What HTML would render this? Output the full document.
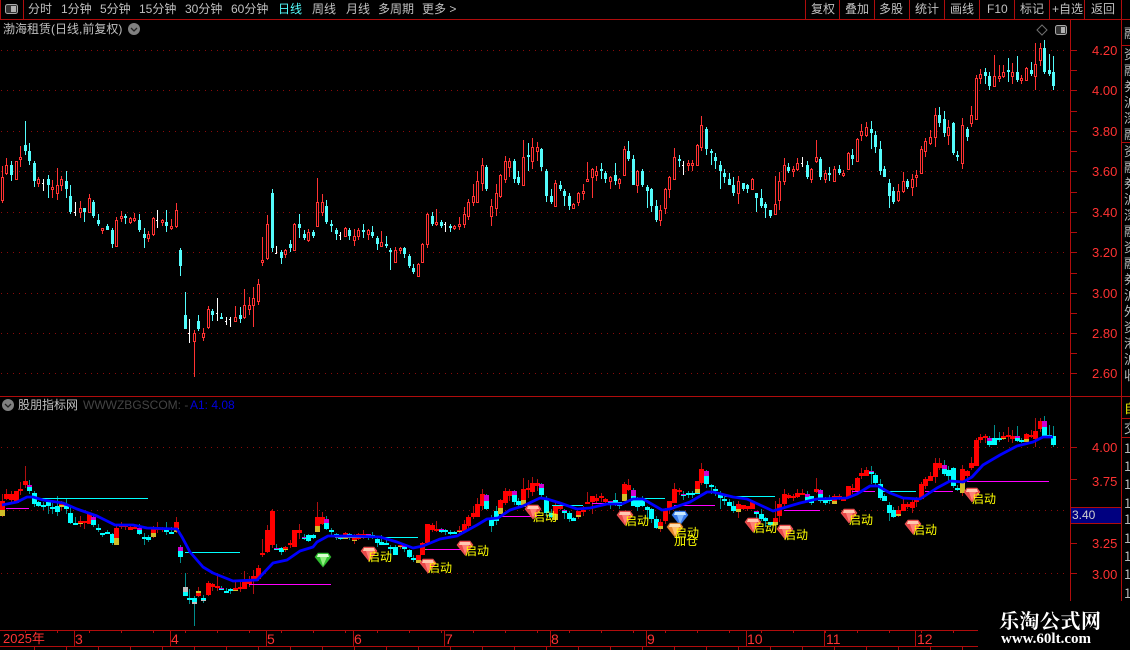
<!DOCTYPE html>
<html><head><meta charset="utf-8">
<style>
html,body{margin:0;padding:0;background:#000;width:1130px;height:650px;overflow:hidden}
#w{position:relative;width:1130px;height:650px;overflow:hidden;background:#000;font-family:"Liberation Sans","WenQuanYi Zen Hei","Noto Sans CJK SC",sans-serif}
svg{position:absolute;left:0;top:0}
.t{position:absolute;white-space:nowrap;font-size:12px;line-height:14px;color:#c0c0c0;font-family:"Liberation Sans","WenQuanYi Zen Hei","Noto Sans CJK SC",sans-serif}
.p{position:absolute;white-space:nowrap;font-size:13px;line-height:14px;color:#ff3232;font-family:"Liberation Sans",sans-serif}
.n{position:absolute;white-space:nowrap;font-size:14px;line-height:14px;color:#ff3232;font-family:"Liberation Sans",sans-serif}
.y{position:absolute;white-space:nowrap;font-size:12px;line-height:12px;color:#ffff00;font-family:"Liberation Sans","WenQuanYi Zen Hei","Noto Sans CJK SC",sans-serif}
.c{position:absolute;left:1124px;width:6px;overflow:hidden;white-space:nowrap;font-size:13px;line-height:14px;color:#b8b8b8;font-family:"WenQuanYi Zen Hei","Noto Sans CJK SC",sans-serif}
</style></head><body><div id="w">
<svg id="s" width="1130" height="650" viewBox="0 0 1130 650" shape-rendering="crispEdges"></svg>

<span class="t" style="left:28px;top:2px">分时</span>
<span class="t" style="left:61px;top:2px">1分钟</span>
<span class="t" style="left:100px;top:2px">5分钟</span>
<span class="t" style="left:139px;top:2px">15分钟</span>
<span class="t" style="left:185px;top:2px">30分钟</span>
<span class="t" style="left:231px;top:2px">60分钟</span>
<span class="t" style="left:278px;top:2px;color:#54fcfc">日线</span>
<span class="t" style="left:312px;top:2px">周线</span>
<span class="t" style="left:346px;top:2px">月线</span>
<span class="t" style="left:378px;top:2px">多周期</span>
<span class="t" style="left:422px;top:2px">更多 &gt;</span>
<span class="t" style="left:811px;top:2px">复权</span>
<span class="t" style="left:845px;top:2px">叠加</span>
<span class="t" style="left:879px;top:2px">多股</span>
<span class="t" style="left:915px;top:2px">统计</span>
<span class="t" style="left:950px;top:2px">画线</span>
<span class="t" style="left:987px;top:2px">F10</span>
<span class="t" style="left:1020px;top:2px">标记</span>
<span class="t" style="left:1052px;top:2px">+自选</span>
<span class="t" style="left:1091px;top:2px">返回</span>

<span class="t" style="left:3px;top:22px">渤海租赁(日线,前复权)</span>
<span class="t" style="left:18px;top:398px">股朋指标网</span>
<span class="t" style="left:83px;top:398px;color:#444">WWWZBGSCOM: -</span>
<span class="t" style="left:190px;top:398px;color:#0000e0">A1: 4.08</span>

<span class="p" style="left:1092px;top:44px">4.20</span>
<span class="p" style="left:1092px;top:84px">4.00</span>
<span class="p" style="left:1092px;top:125px">3.80</span>
<span class="p" style="left:1092px;top:165px">3.60</span>
<span class="p" style="left:1092px;top:206px">3.40</span>
<span class="p" style="left:1092px;top:246px">3.20</span>
<span class="p" style="left:1092px;top:287px">3.00</span>
<span class="p" style="left:1092px;top:327px">2.80</span>
<span class="p" style="left:1092px;top:367px">2.60</span>
<span class="p" style="left:1092px;top:441px">4.00</span>
<span class="p" style="left:1092px;top:475px">3.75</span>
<span class="p" style="left:1092px;top:537px">3.25</span>
<span class="p" style="left:1092px;top:568px">3.00</span>
<span class="t" style="left:1072px;top:508px;color:#d0d0d0">3.40</span>

<span class="c" style="top:26px">融</span><span class="c" style="top:47px">资</span><span class="c" style="top:63px">融</span><span class="c" style="top:79px">券</span><span class="c" style="top:95px">沪</span><span class="c" style="top:111px">深</span><span class="c" style="top:127px">融</span><span class="c" style="top:144px">资</span><span class="c" style="top:160px">融</span><span class="c" style="top:176px">券</span><span class="c" style="top:192px">沪</span><span class="c" style="top:208px">深</span><span class="c" style="top:224px">融</span><span class="c" style="top:240px">资</span><span class="c" style="top:256px">融</span><span class="c" style="top:272px">券</span><span class="c" style="top:288px">沪</span><span class="c" style="top:304px">外</span><span class="c" style="top:320px">资</span><span class="c" style="top:336px">港</span><span class="c" style="top:352px">沪</span><span class="c" style="top:368px">收</span>
<span class="c" style="top:401px;color:#e8e800">自</span><span class="c" style="top:421px">交</span>
<span class="c" style="top:441px">1</span><span class="c" style="top:459px">1</span><span class="c" style="top:477px">1</span><span class="c" style="top:496px">1</span><span class="c" style="top:512px">1</span><span class="c" style="top:531px">1</span><span class="c" style="top:549px">1</span><span class="c" style="top:567px">1</span><span class="c" style="top:586px">1</span>

<span class="n" style="left:3px;top:632px;font-size:13px;font-family:'Liberation Sans','WenQuanYi Zen Hei',sans-serif">2025年</span>
<span class="n" style="left:75px;top:632px">3</span>
<span class="n" style="left:171px;top:632px">4</span>
<span class="n" style="left:267px;top:632px">5</span>
<span class="n" style="left:354px;top:632px">6</span>
<span class="n" style="left:445px;top:632px">7</span>
<span class="n" style="left:551px;top:632px">8</span>
<span class="n" style="left:647px;top:632px">9</span>
<span class="n" style="left:747px;top:632px">10</span>
<span class="n" style="left:826px;top:632px">11</span>
<span class="n" style="left:917px;top:632px">12</span>

<span class="y" style="left:368px;top:551px">启动</span>
<span class="y" style="left:428px;top:562px">启动</span>
<span class="y" style="left:465px;top:545px">启动</span>
<span class="y" style="left:533px;top:511px">启动</span>
<span class="y" style="left:625px;top:515px">启动</span>
<span class="y" style="left:675px;top:527px">启动</span>
<span class="y" style="left:674px;top:535px">加仓</span>
<span class="y" style="left:753px;top:522px">启动</span>
<span class="y" style="left:784px;top:529px">启动</span>
<span class="y" style="left:849px;top:514px">启动</span>
<span class="y" style="left:913px;top:524px">启动</span>
<span class="y" style="left:972px;top:493px">启动</span>

<div style="position:absolute;left:978px;top:601px;width:152px;height:49px;background:#000"></div>
<span style="position:absolute;left:999px;top:609px;font:bold 20px/22px 'Noto Serif CJK SC','Noto Sans CJK SC',serif;color:#fff;white-space:nowrap;letter-spacing:.5px">乐淘公式网</span>
<span style="position:absolute;left:1001px;top:632px;font:bold 15px/15px 'Liberation Serif',serif;color:#fff;white-space:nowrap">www.60lt.com</span>
</div>
<script>
var D="2 166 177 201 203 r y|6 158 165 174 175 r r|11 161 165 175 181 c r|16 161 161 180 180 r r|20 146 157 160 167 r r|25 121 145 151 155 c r|29 143 151 161 165 c m|34 161 163 181 187 c c|38 177 179 184 187 r c|43 179 183 183 191 w c|48 175 179 185 198 c c|52 180 187 190 198 r c|57 168 185 194 200 r c|61 176 179 186 191 r y|66 171 181 189 198 c m|70 185 196 212 214 c c|75 202 212 212 216 w c|80 201 208 213 218 r y|84 208 208 212 222 c r|89 194 198 213 213 r r|93 200 202 216 218 c m|98 214 220 224 226 c c|102 228 228 231 234 r c|107 224 226 230 230 c c|112 228 230 244 248 c c|116 217 220 247 247 r y|121 211 216 219 222 r r|125 214 216 218 224 c r|130 217 218 223 224 r r|134 213 218 221 222 r r|139 214 220 230 232 c m|144 228 234 238 248 c c|148 231 234 239 242 r c|153 217 218 235 236 r y|157 210 220 220 228 w r|162 219 220 223 226 r r|166 210 222 226 232 c c|171 219 226 229 230 r c|176 203 210 227 228 r y|180 248 250 266 276 c m|185 292 315 329 329 c g|189 319 333 333 343 w c|194 330 333 342 377 r h|198 315 321 329 331 c t|203 328 333 338 341 r h|208 306 309 328 329 r r|212 309 311 315 321 c r|217 298 313 313 321 w r|221 313 317 319 319 c m|226 317 321 321 325 w c|230 317 319 319 327 w c|235 306 317 322 322 r y|240 307 315 319 323 c r|244 289 305 318 319 r r|249 297 305 310 315 r r|253 287 298 306 327 r r|258 279 284 302 305 r r|262 237 260 263 266 r r|267 215 224 259 260 r r|272 189 193 248 252 c r|276 246 253 253 254 w m|281 250 252 258 264 c c|285 249 250 255 258 r y|290 240 244 248 252 c r|294 223 224 251 251 r r|299 214 224 228 238 c r|304 230 234 238 240 c m|308 229 232 241 242 r c|313 230 232 236 238 c c|317 178 202 227 227 r y|322 194 202 213 216 r r|326 200 206 222 224 c m|331 220 224 226 232 c c|336 228 230 234 240 c c|340 232 235 235 240 w c|345 227 228 237 237 r y|349 228 230 236 240 c c|354 229 236 241 246 r y|358 228 230 237 240 r r|363 224 230 232 238 c r|368 229 230 235 240 r m|372 226 232 236 238 c c|377 236 238 244 250 c c|381 231 242 247 247 r c|386 236 244 246 248 c c|390 248 250 252 270 c c|395 247 250 263 263 r c|400 247 248 251 254 r y|404 247 248 254 258 c m|409 254 256 266 268 c c|413 264 268 272 274 c c|418 263 264 277 277 r y|422 243 244 263 263 r r|427 213 214 245 248 r r|432 212 216 224 226 c r|436 209 222 225 226 r r|441 220 222 226 228 c m|445 222 224 224 232 w c|450 224 226 228 232 c c|454 225 226 229 230 r c|459 217 224 227 230 r y|464 207 214 225 228 r r|468 199 202 217 220 r r|473 184 196 203 206 r r|477 171 181 203 203 r r|482 158 165 184 191 r r|486 165 167 189 191 c m|491 199 206 217 226 r c|496 184 193 209 216 r c|500 174 175 197 198 r y|505 156 161 180 183 r r|509 158 161 168 177 r r|514 159 161 179 183 c m|518 171 177 183 185 c c|523 140 157 186 186 r y|528 143 155 157 171 c r|532 138 147 162 169 r r|537 142 147 152 161 r r|541 148 149 167 171 c m|546 169 171 196 202 c c|551 189 196 202 204 c c|555 180 183 207 207 r y|560 181 185 189 191 c r|564 189 191 196 206 c m|569 193 196 206 210 c c|573 203 204 209 209 r c|578 192 193 203 206 r y|583 184 191 194 200 r r|587 162 179 182 182 r r|592 168 169 178 198 r r|596 166 171 176 181 r r|601 163 169 171 179 c r|605 171 173 179 183 c r|610 176 177 182 189 r m|615 163 175 181 185 c c|619 178 179 184 189 r c|624 146 149 176 176 r y|628 141 151 159 161 c r|633 155 159 185 185 c m|637 170 171 186 193 r c|642 169 171 185 187 c c|647 185 187 191 208 c c|651 188 189 206 212 c c|656 200 206 220 222 c c|660 205 210 221 226 r y|665 188 189 209 214 r r|669 176 177 190 198 r r|674 148 157 180 180 r r|679 155 159 161 167 c r|683 161 165 165 175 w m|688 160 163 166 171 r c|692 160 163 166 171 r c|697 144 145 166 166 r y|701 116 125 148 151 r r|706 127 129 149 155 c m|711 149 151 153 165 c c|715 153 157 161 169 c c|720 161 165 171 189 c c|724 169 173 177 183 c c|729 173 179 185 185 c c|733 177 185 193 196 c c|738 176 181 194 204 r y|743 183 183 189 191 c r|747 184 185 189 193 c r|752 178 179 190 190 r r|756 193 193 198 212 c m|761 189 198 206 208 c c|765 202 204 208 218 c c|770 210 210 216 218 c c|775 176 204 215 215 r y|779 172 181 201 210 r r|784 158 165 182 185 r r|788 163 167 171 173 c r|793 166 169 172 177 r r|797 158 163 170 171 r r|802 157 163 163 167 w r|807 161 165 177 179 c m|811 168 169 180 183 r c|816 140 157 162 163 r r|820 157 159 177 180 c m|825 170 173 180 183 r c|829 167 173 175 181 c c|834 166 169 182 182 r y|839 165 169 173 175 c r|843 170 173 176 177 r r|848 152 153 170 170 r r|852 149 155 159 165 c r|857 138 139 162 162 r r|861 124 131 136 141 r r|866 122 127 136 137 r r|871 121 129 133 149 c m|875 131 135 147 153 c c|880 141 149 171 175 c c|884 166 169 177 177 c c|889 179 183 196 208 c c|893 187 191 202 204 c c|898 184 191 201 202 r y|903 172 181 192 193 r r|907 179 181 187 189 c r|912 174 179 188 196 r r|916 170 175 178 187 r r|921 146 149 174 174 r r|925 138 141 152 157 r r|930 130 137 144 145 r r|935 108 115 138 147 r r|939 107 115 123 127 c r|944 111 119 133 137 c m|948 120 127 136 145 r c|953 122 123 153 155 c c|957 151 155 157 161 c c|962 118 125 164 169 r y|967 127 129 137 141 c r|971 106 115 124 127 r r|976 75 78 120 120 r r|980 69 74 79 84 r r|985 68 72 76 84 c r|989 72 76 86 90 c m|994 55 76 87 87 r c|999 65 76 79 82 r c|1003 65 72 77 78 r y|1008 58 70 72 82 c r|1012 63 72 77 84 r r|1017 56 72 80 82 c m|1021 75 78 81 84 r c|1026 67 68 81 81 r y|1031 62 70 74 76 c r|1035 43 64 77 90 r r|1040 43 48 61 66 r r|1044 40 48 72 74 c m|1049 54 70 74 76 c c|1053 56 72 86 90 c c";
var o=[],R="#ff3232",C="#54fcfc",F="#b00c0c";
function r(x,y,w,h,c){o.push('<rect x="'+x+'" y="'+y+'" width="'+w+'" height="'+h+'" fill="'+c+'"/>')}
function gl(y){o.push('<line x1="1" x2="1068" y1="'+(y+.5)+'" y2="'+(y+.5)+'" stroke="#8c0a0a" stroke-dasharray="1 5"/>')}
[50,90,131,171,212,252,293,333,373,447,510,573].forEach(gl);
// frame
r(0,19,1130,1,F);r(0,396,1130,1,F);r(1070,19,1,582,F);r(1121,19,1,582,F);
r(0,0,1,19,F);r(23,0,1,19,F);
[805,839,874,909,944,979,1014,1049,1084,1121].forEach(function(x){r(x,0,1,19,F)});
r(1121,45,9,1,F);r(1121,142,9,1,F);r(1121,418,9,1,F);r(1121,437,9,1,F);
[50,70,90,111,131,151,171,192,212,232,252,273,293,313,333,353,373,447,479,510,543,573].forEach(function(y){r(1071,y,6,1,F)});
r(0,630,978,1,F);r(0,646,978,1,F);
[74,170,266,353,444,550,646,746,824,915].forEach(function(x){r(x,630,1,16,F)});
for(var i=25;i<978;i+=32){r(i,630,1,3,F);r(i+9,646,1,4,F)}
// price box
r(1071,507,50,1,F);r(1071,523,50,1,F);r(1071,508,50,15,"#000080");
// upper icons
o.push('<rect x="5.5" y="4.5" width="12" height="9" rx="2" fill="#333" stroke="#a8a8a8" shape-rendering="auto"/>');r(11,6,5,6,"#b0b0b0");
o.push('<rect x="1055.5" y="25.5" width="11" height="9" rx="2" fill="#333" stroke="#a8a8a8" shape-rendering="auto"/>');r(1061,27,4,6,"#b0b0b0");
o.push('<polygon points="1042,25 1047,30 1042,35 1037,30" fill="none" stroke="#707070" shape-rendering="auto"/>');
[[134,29],[8,405]].forEach(function(p){o.push('<circle cx="'+p[0]+'" cy="'+p[1]+'" r="6" fill="#808080" shape-rendering="auto"/><path d="M'+(p[0]-3)+' '+(p[1]-1)+'l3 3l3 -3" fill="none" stroke="#222" stroke-width="1.3" shape-rendering="auto"/>')});
var rows=D.split("|").map(function(s){var a=s.split(" ");return{x:+a[0],h:+a[1],t:+a[2],b:+a[3],l:+a[4],k:a[5],c:a[6]}});
// upper candles
rows.forEach(function(d){
 if(d.k=="w"){r(d.x,d.h,1,d.l-d.h,"#fff");r(d.x-1,d.t,2,1,"#fff");return}
 var c=d.k=="r"?R:C;
 r(d.x,d.h,1,d.l-d.h,c);
 r(d.x-1,d.t,3,Math.max(d.b-d.t,2),c);
 if(d.k=="r"&&d.b-d.t>2)r(d.x,d.t+1,1,d.b-d.t-2,"#000");
});
// lower
function L(y){return Math.round(447.5+(y-90.5)*0.6213)}
rows.forEach(function(d){
 var c=(d.c=="r"||d.c=="y"||d.c=="t")?"#b01010":"#008c8c";
 r(d.x,L(d.h),1,L(d.l)-L(d.h),c);
});
rows.forEach(function(d){
 var t=L(d.t),b=Math.max(L(d.b),t+2),h=b-t,x=d.x-2,w=5;
 var s=Math.round(h*.4);
 switch(d.c){
  case"r":r(x,t,w,h,"#ff0000");break;
  case"c":r(x,t,w,h,"#00ffff");break;
  case"y":r(x,t,w,h,"#ff0000");r(x,b-s,w,s,"#d0bc28");break;
  case"t":r(x,t,w,h,"#ff0000");r(x,t,w,s,"#d0bc28");break;
  case"m":r(x,t,w,h,"#00ffff");r(x,t,w,s,"#d000d0");break;
  case"g":r(x,t,w,h,"#00ffff");r(x,t,w,h-s,"#c0c0c0");break;
  case"h":r(x,t,w,h,"#00ffff");r(x,b-s,w,s,"#c0c0c0");break;
 }
});
// horizontal levels
[[38,148,498],[185,240,552],[380,418,537],[552,583,505],[632,665,498],[687,700,493],[725,775,496],[883,916,491]].forEach(function(a){r(a[0],a[2],a[1]-a[0],1,"#00ffff")});
[[6,29,508],[249,331,584],[427,463,549],[500,537,516],[592,622,503],[674,715,505],[784,820,510],[852,875,491],[925,953,491],[967,1049,481]].forEach(function(a){r(a[0],a[2],a[1]-a[0],1,"#ff00ff")});
r(335,537,45,1,"#9a9a9a");r(425,549,2,1,"#9a9a9a");
// blue line
var P="2,505 17,502 27,497 33,497 43,500 63,503 77,509 97,516 115,525 133,525 147,528 177,529 182,537 190,552 203,567 213,573 233,581 257,580 273,563 287,560 300,551 313,547 317,542 328,536 353,536 380,537 397,542 413,548 423,546 440,539 457,536 477,525 487,519 498,518 510,510 523,506 540,498 547,499 560,503 577,509 590,508 607,504 622,504 633,499 643,499 662,510 670,509 690,502 707,492 713,492 733,497 747,499 760,505 773,511 783,508 800,503 817,499 847,498 857,494 870,486 878,486 890,493 903,498 920,499 937,488 950,481 963,482 972,477 983,465 1000,455 1017,446 1033,442 1043,437 1053,437";
o.push('<polyline points="'+P+'" fill="none" stroke="#0000ff" stroke-width="2.8" stroke-linejoin="round" shape-rendering="auto"/>');
// gems
function G(x,y,a,b,c,e){o.push('<g shape-rendering="auto"><polygon points="'+(x-5)+','+y+' '+(x+5)+','+y+' '+(x+8)+','+(y+4)+' '+x+','+(y+14)+' '+(x-8)+','+(y+4)+'" fill="'+b+'" stroke="'+e+'" stroke-width=".6"/><polygon points="'+(x-5)+','+(y+1)+' '+(x+5)+','+(y+1)+' '+(x+6)+','+(y+4)+' '+(x-6)+','+(y+4)+'" fill="'+a+'"/><polygon points="'+(x-3)+','+(y+4)+' '+(x+4)+','+(y+4)+' '+x+','+(y+13)+'" fill="'+c+'"/></g>')}
[[369,547],[428,559],[465,541],[533,505],[625,511],[753,518],[785,525],[849,509],[913,520],[972,488]].forEach(function(a){G(a[0],a[1],"#ffc8b0","#e84848","#ff8078","#f05858")});
G(323,553,"#d8ffd0","#30c030","#90f080","#30b030");
G(680,511,"#c8e8ff","#3878e8","#80b8ff","#3070d8");
G(675,523,"#ffe0b0","#e88830","#ffc070","#d88028");
document.getElementById("s").innerHTML=o.join("");
</script>
</body></html>
